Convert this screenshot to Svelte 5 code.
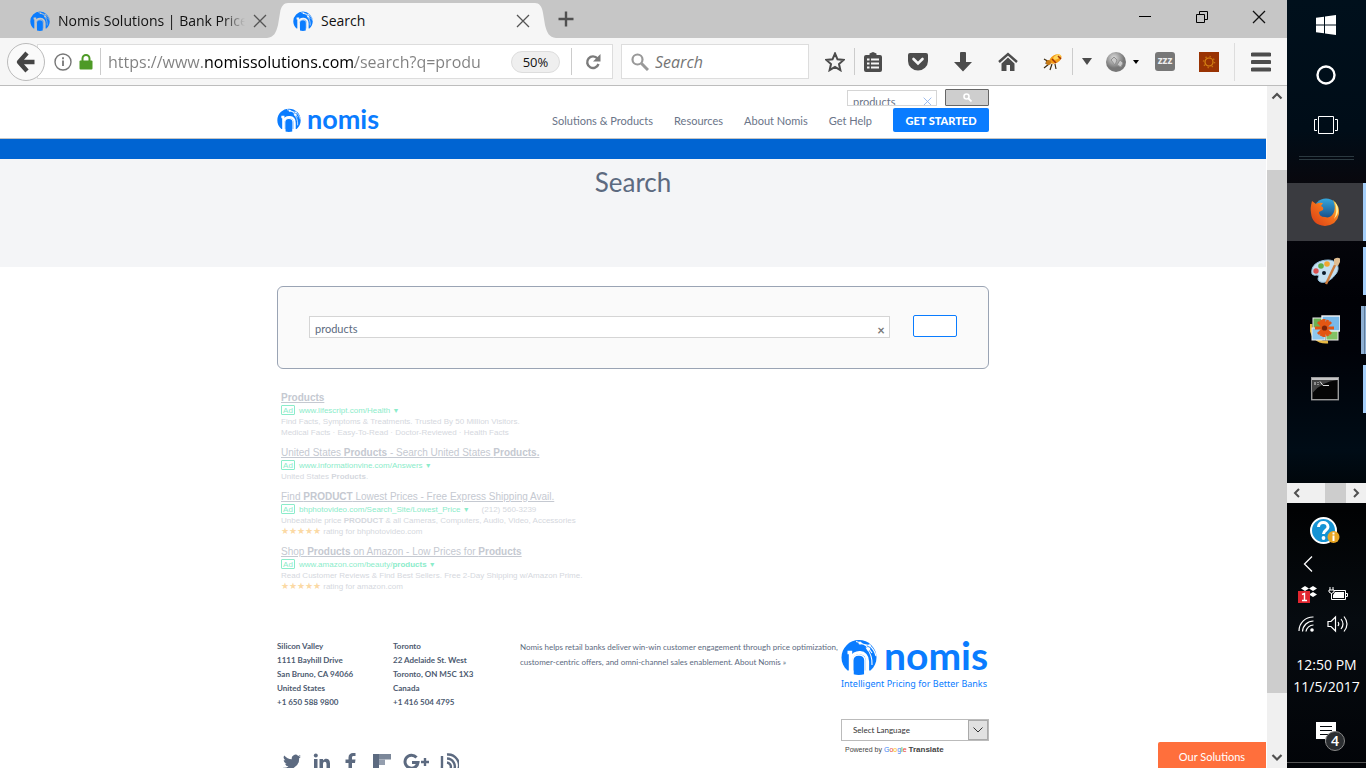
<script>
  let query = $state('products');
  let siteQuery = $state('products');
  let browserQuery = $state('');
  let address = $state('https://www.nomissolutions.com/search?q=products');

  const navLinks = ['Solutions & Products', 'Resources', 'About Nomis', 'Get Help'];

  const results = [
    {
      title: [['Products', true]],
      url: [['www.lifescript.com/Health', false]],
      lines: [
        [['Find Facts, Symptoms & Treatments. Trusted By 50 Million Visitors.', false]],
        [['Medical Facts · Easy-To-Read · Doctor-Reviewed · Health Facts', false]]
      ]
    },
    {
      title: [['United States ', false], ['Products', true], [' - Search United States ', false], ['Products.', true]],
      url: [['www.informationvine.com/Answers', false]],
      lines: [[['United States ', false], ['Products', true], ['.', false]]]
    },
    {
      title: [['Find ', false], ['PRODUCT', true], [' Lowest Prices - Free Express Shipping Avail.', false]],
      url: [['bhphotovideo.com/Search_Site/Lowest_Price', false]],
      phone: '(212) 560-3239',
      lines: [[['Unbeatable price ', false], ['PRODUCT', true], [' & all Cameras, Computers, Audio, Video, Accessories', false]]],
      rating: 'rating for bhphotovideo.com'
    },
    {
      title: [['Shop ', false], ['Products', true], [' on Amazon - Low Prices for ', false], ['Products', true]],
      url: [['www.amazon.com/beauty/', false], ['products', true]],
      lines: [[['Read Customer Reviews & Find Best Sellers. Free 2-Day Shipping w/Amazon Prime.', false]]],
      rating: 'rating for amazon.com'
    }
  ];

  const offices = [
    ['Silicon Valley', '1111 Bayhill Drive', 'San Bruno, CA 94066', 'United States', '+1 650 588 9800'],
    ['Toronto', '22 Adelaide St. West', 'Toronto, ON M5C 1X3', 'Canada', '+1 416 504 4795']
  ];
</script>

{#snippet runs(parts)}{#each parts as [text, bold]}{#if bold}<b>{text}</b>{:else}{text}{/if}{/each}{/snippet}

{#snippet mark(size, ground = '#fff')}
  <svg class="mark" width={size} height={size} viewBox="0 0 36 36" aria-hidden="true">
    <path fill="#0a7cff" d="M6.500 31.500C2.500 28 .5 23.500 .5 18.500a17.500 17.500 0 0 1 35 0C35.500 23.500 33.500 28 29.500 31.500Z" />
    <g fill="none" stroke={ground}>
      <path stroke-width="3.400" d="M6.500 13.500H9.500V33" />
      <path stroke-width="3.200" d="M10 19.500C12.500 11.500 26.500 11 26.500 22.500V33" />
      <path stroke-width="1.100" d="M15 2.500C21 3.500 27 7 31 14M19 4.500L28 6.500M25 8.500C29 13 31.500 18 31 26M29 7C32.500 10 34 13 35 17" />
    </g>
    <path fill="#0a7cff" d="M12.500 35.300V21.500C12.500 18.500 14.500 16.500 17.800 16.500S23.200 18.500 23.200 21.500V35.300C20 36.200 15.500 36.200 12.500 35.300Z" />
    <path fill="none" stroke={ground} stroke-width="1.600" d="M11.700 36V21.500C11.700 14 24 14 24 21.500V36" />
    <g fill={ground}><circle cx="19" cy="4" r="1.500" /><circle cx="27.500" cy="10" r="1.800" /><circle cx="28.500" cy="6.500" r="1.300" /></g>
  </svg>
{/snippet}

{#snippet cross(size)}
  <svg width={size} height={size} viewBox="0 0 14 14" aria-hidden="true"><path d="M1 1L13 13M13 1L1 13" fill="none" stroke="currentColor" stroke-width="1.300" /></svg>
{/snippet}

<div class="desktop">
  <section class="browser" aria-label="Browser">
    <div class="tabs">
      <div class="tab">
        {@render mark(20, '#c6c6c6')}
        <span class="tab-title fade">Nomis Solutions | Bank Price</span>
        <button class="plain tab-close" aria-label="Close tab">{@render cross(14)}</button>
      </div>
      <div class="tab active">
        <svg class="edge left" width="21" height="35" viewBox="0 0 21 35" aria-hidden="true"><path fill="#f6f6f6" d="M0 35C7 34 9 30 11 22L13 10C14 3 17 0 21 0V35Z" /></svg>
        {@render mark(20, '#f6f6f6')}
        <span class="tab-title">Search</span>
        <button class="plain tab-close" aria-label="Close tab">{@render cross(14)}</button>
        <svg class="edge right" width="21" height="35" viewBox="0 0 21 35" aria-hidden="true"><path fill="#f6f6f6" d="M21 35C14 34 12 30 10 22L8 10C7 3 4 0 0 0V35Z" /></svg>
      </div>
      <button class="plain new-tab" aria-label="New tab">
        <svg width="16" height="16" viewBox="0 0 16 16"><path d="M8 .5V15.500M.5 8H15.500" stroke="#505050" stroke-width="2.400" /></svg>
      </button>
      <div class="window-controls">
        <button class="plain" aria-label="Minimize"><svg width="14" height="14" viewBox="0 0 14 14"><path d="M1 6.500H13" stroke="#000" /></svg></button>
        <button class="plain" aria-label="Restore"><svg width="14" height="14" viewBox="0 0 14 14"><path d="M1.500 4.500h8v8h-8zM4.500 4.500v-3h8v8h-3" fill="none" stroke="#000" /></svg></button>
        <button class="plain" aria-label="Close">{@render cross(14)}</button>
      </div>
    </div>

    <div class="toolbar">
      <button class="back" aria-label="Back">
        <svg width="20" height="22" viewBox="0 0 20 22"><path d="M11 2L3 11L11 20M3.500 11H18.500" fill="none" stroke="#454545" stroke-width="4.400" stroke-linejoin="round" /></svg>
      </button>
      <div class="url">
        <svg width="18" height="18" viewBox="0 0 18 18" aria-hidden="true"><circle cx="9" cy="9" r="8" fill="none" stroke="#777" stroke-width="1.400" /><path d="M9 7.500V13M9 4.300V6.200" stroke="#777" stroke-width="1.800" /></svg>
        <svg width="14" height="16" viewBox="0 0 14 16" aria-hidden="true"><path d="M3.500 8V4.500a3.500 3.500 0 0 1 7 0V8" fill="none" stroke="#4e9a26" stroke-width="2" /><rect x=".5" y="6.500" width="13" height="9" rx="1" fill="#4e9a26" /></svg>
        <span class="rule"></span>
        <input class="address" aria-label="Address" bind:value={address} />
        <button class="zoom">50%</button>
        <span class="rule"></span>
        <button class="plain reload" aria-label="Reload"><svg width="16" height="16" viewBox="0 0 16 16"><path d="M12.500 4.500A5.800 5.800 0 1 0 13.500 10" fill="none" stroke="#7b7b7b" stroke-width="2.400" /><path d="M15.500 0V7.500H8Z" fill="#7b7b7b" /></svg></button>
      </div>
      <div class="find">
        <svg width="18" height="18" viewBox="0 0 18 18" aria-hidden="true"><circle cx="6.500" cy="6.500" r="5" fill="none" stroke="#999" stroke-width="2.200" /><path d="M10.500 10.500L17 17" stroke="#999" stroke-width="3" /></svg>
        <input aria-label="Search the web" placeholder="Search" bind:value={browserQuery} />
      </div>
      <div class="tools">
        <button class="plain" aria-label="Bookmark"><svg width="20" height="20" viewBox="0 0 20 20"><path d="M10 1.500L12.500 7.300L18.700 7.900L14 12L15.400 18.200L10 15L4.600 18.200L6 12L1.300 7.900L7.500 7.300Z" fill="none" stroke="#4c4c4c" stroke-width="2" /></svg></button>
        <span class="rule"></span>
        <div class="main-tools">
          <button class="plain" aria-label="Reading list"><svg width="20" height="20" viewBox="0 0 20 20"><path fill="#4c4c4c" d="M6.500 3V1.500L10 0l3.500 1.500V3H17q2 0 2 2v13q0 2-2 2H3q-2 0-2-2V5q0-2 2-2Z" /><path d="M4 7.500h2.500M8 7.500h8M4 11.500h2.500M8 11.500h8M4 15.500h2.500M8 15.500h8" stroke="#f6f6f6" stroke-width="2" /></svg></button>
          <button class="plain" aria-label="Pocket"><svg width="20" height="20" viewBox="0 0 20 20"><path fill="#4c4c4c" d="M2 1h16q2 0 2 2v6a10 9.500 0 0 1-20 0V3q0-2 2-2Z" /><path d="M5.500 7L10 11.500L14.500 7" fill="none" stroke="#f6f6f6" stroke-width="2.600" stroke-linecap="round" /></svg></button>
          <button class="plain" aria-label="Downloads"><svg width="20" height="20" viewBox="0 0 20 20"><path fill="#4c4c4c" d="M7 1q0-1 1-1h4q1 0 1 1v9h6L10 19.500L1 10h6Z" /></svg></button>
          <button class="plain" aria-label="Home"><svg width="20" height="20" viewBox="0 0 20 20"><path d="M1 10L10 2L19 10" fill="none" stroke="#4c4c4c" stroke-width="2.400" /><path fill="#4c4c4c" d="M3.500 11.500L10 5.500L16.500 11.500V19H12V13H8.500V19H3.500Z" /></svg></button>
          <button class="plain" aria-label="Firebug"><svg width="20" height="20" viewBox="0 0 20 20"><path d="M6 10L1 7M6 12L1 16M9 12L7 18M12 12l1 5M4 8L3 12" stroke="#3b2a10" stroke-width="1.200" /><ellipse cx="12.500" cy="7" rx="6.500" ry="4" transform="rotate(-30 12.500 7)" fill="#f49a14" /><ellipse cx="14" cy="5" rx="4" ry="2" transform="rotate(-30 14 5)" fill="#ffd65a" /><path d="M9 7l4 4M15 4l3 3" stroke="#a13505" stroke-width="1.500" /><circle cx="5.500" cy="10.500" r="2.500" fill="#c77a15" /></svg></button>
        </div>
        <span class="rule"></span>
        <button class="plain" aria-label="Firebug menu"><svg width="10" height="7" viewBox="0 0 10 7"><path fill="#4c4c4c" d="M0 0H10L5 7Z" /></svg></button>
        <button class="plain globe" aria-label="Proxy"><svg width="20" height="20" viewBox="0 0 20 20"><defs><radialGradient id="ball" cx=".4" cy=".3"><stop offset="0" stop-color="#ddd" /><stop offset="1" stop-color="#777" /></radialGradient></defs><circle cx="10" cy="10" r="10" fill="url(#ball)" /><path d="M5 8l3-3 3 3-2 5zM11 13l3-5 3 3-2 4z" fill="#c9c9c9" stroke="#909090" /></svg></button>
        <button class="plain tiny" aria-label="Proxy menu"><svg width="6" height="4" viewBox="0 0 6 4"><path d="M0 0H6L3 4Z" /></svg></button>
        <button class="zzz" aria-label="Snooze">zzz</button>
        <button class="plain sun" aria-label="Extension"><svg width="20" height="20" viewBox="0 0 20 20"><rect width="20" height="20" fill="#993303" /><circle cx="10" cy="10" r="4" fill="none" stroke="#d88714" stroke-width="1.200" /><circle cx="10" cy="10" r="5.500" fill="none" stroke="#c97410" stroke-width="1.500" stroke-dasharray="1.300 3" /></svg></button>
        <span class="rule tall"></span>
        <button class="plain" aria-label="Menu"><svg width="20" height="20" viewBox="0 0 20 20"><path d="M1.500 2.500H18.500M1.500 10H18.500M1.500 17.500H18.500" stroke="#4c4c4c" stroke-width="4" stroke-linecap="round" /></svg></button>
      </div>
    </div>

    <div class="viewport">
      <div class="page">
        <header>
          <div class="wrap">
            <form class="mini" onsubmit={(e) => e.preventDefault()}>
              <div class="mini-box">
                <input aria-label="Search site" bind:value={siteQuery} />
                <button type="button" class="plain" aria-label="Clear" onclick={() => (siteQuery = '')}>{@render cross(9)}</button>
              </div>
              <button class="mini-go" aria-label="Search"><svg width="9" height="9" viewBox="0 0 9 9"><circle cx="3.500" cy="3.500" r="2.500" fill="none" stroke="#fff" stroke-width="1.600" /><path d="M5.500 5.500L8.500 8.500" stroke="#fff" stroke-width="1.800" /></svg></button>
            </form>
            <div class="nav-row">
              <a class="logo" href="#home">{@render mark(24)}<span>nomis</span></a>
              <nav>
                {#each navLinks as link}<a href="#nav">{link}</a>{/each}
                <a class="start" href="#start">GET STARTED</a>
              </nav>
            </div>
          </div>
        </header>
        <div class="band"></div>
        <div class="hero"><h1>Search</h1></div>

        <main class="wrap">
          <form class="search-card" onsubmit={(e) => e.preventDefault()}>
            <div class="search-box">
              <input aria-label="Search query" bind:value={query} />
              <button type="button" class="plain" aria-label="Clear" onclick={() => (query = '')}>×</button>
            </div>
            <button class="search-go" aria-label="Search"></button>
          </form>

          <div class="results">
            {#each results as r}
              <article>
                <h2><a href="#result">{@render runs(r.title)}</a></h2>
                <p class="source"><span class="ad">Ad</span><span>{@render runs(r.url)} <i>▼</i></span>{#if r.phone}<span class="phone">{r.phone}</span>{/if}</p>
                {#each r.lines as line}<p>{@render runs(line)}</p>{/each}
                {#if r.rating}<p><span class="stars">★★★★★</span> {r.rating}</p>{/if}
              </article>
            {/each}
          </div>
        </main>

        <footer class="wrap">
          <div class="contact">
            <div class="offices">
              {#each offices as lines}
                <address>{#each lines as line}<span>{line}</span>{/each}</address>
              {/each}
            </div>
            <div class="social">
              <a href="#twitter" aria-label="Twitter"><svg width="18" height="18" viewBox="0 0 24 24"><path fill="#5c6a80" d="M24 4.600a10 10 0 0 1-2.800.8A5 5 0 0 0 23.300 2.700a10 10 0 0 1-3.100 1.200A4.900 4.900 0 0 0 11.800 8.400 14 14 0 0 1 1.700 3.200a4.900 4.900 0 0 0 1.500 6.600A4.900 4.900 0 0 1 1 9.200a4.900 4.900 0 0 0 3.900 4.900 5 5 0 0 1-2.200.1 4.900 4.900 0 0 0 4.600 3.400A9.900 9.900 0 0 1 0 19.500a14 14 0 0 0 21.500-12.400A10 10 0 0 0 24 4.600Z" /></svg></a>
              <a href="#linkedin" aria-label="LinkedIn"><svg width="18" height="18" viewBox="0 0 18 18"><path fill="#5c6a80" d="M1 6h3.500v11H1zM6.500 6H10v1.500C12 4.800 17 5 17 10.500V17h-3.500v-6c0-3-3.500-3-3.500 0v6H6.500z" /><circle cx="2.800" cy="2.500" r="2" fill="#5c6a80" /></svg></a>
              <a href="#facebook" aria-label="Facebook"><svg width="18" height="18" viewBox="0 0 18 18"><path fill="#5c6a80" d="M5.500 18V10H2.500V6.500h3V4.500C5.500 1.500 7.500 0 10 0H12.500v3h-1.800C9.500 3 9 3.500 9 4.500v2H12.500L12 10H9v8Z" /></svg></a>
              <a href="#flipboard" aria-label="Flipboard"><svg width="18" height="18" viewBox="0 0 18 18"><path fill="#5c6a80" d="M0 1h6v17H0z" /><path fill="#7b8799" d="M6 1h12v5.500H6z" /><path fill="#949eae" d="M6 6.500h6V12H6z" /></svg></a>
              <a class="gplus" href="#google" aria-label="Google Plus"><svg width="27" height="18" viewBox="0 0 27 18"><path d="M13.500 4.500A6.500 6.500 0 1 0 15 9.500H9" fill="none" stroke="#5c6a80" stroke-width="3" /><path d="M22 5v8M18 9h8" stroke="#5c6a80" stroke-width="2.400" /></svg></a>
              <a href="#blog" aria-label="Blog feed"><svg width="19" height="18" viewBox="0 0 19 18"><path d="M2 3v10a4.500 4.500 0 1 0 5-3.500M7 5.500a8 8 0 0 1 7 11.500M7 1.500a11 11 0 0 1 11 15.500" fill="none" stroke="#5c6a80" stroke-width="2.400" /></svg></a>
            </div>
          </div>
          <p class="about">Nomis helps retail banks deliver win-win customer engagement through price optimization, customer-centric offers, and omni-channel sales enablement. <a href="#about">About Nomis »</a></p>
          <div class="brand">
            <a class="logo large" href="#home">{@render mark(36)}<span>nomis</span></a>
            <div class="tagline">Intelligent Pricing for Better Banks</div>
            <div class="language">
              <select aria-label="Select Language"><option>Select Language</option></select>
              <span class="arrow"><svg width="10" height="6" viewBox="0 0 10 6" aria-hidden="true"><path d="M.5 .5L5 5L9.500 .5" fill="none" stroke="#333" /></svg></span>
            </div>
            <div class="powered">Powered by <span class="google"><i>G</i><i>o</i><i>o</i><i>g</i><i>l</i><i>e</i></span> <b>Translate</b></div>
          </div>
        </footer>
        <button class="solutions">Our Solutions</button>
      </div>
      <div class="scroll" aria-hidden="true">
        <svg width="20" height="20" viewBox="0 0 20 20"><path d="M5.500 12.500L10 8L14.500 12.500" fill="none" stroke="#505050" stroke-width="2.200" /></svg>
        <div class="track"><div class="thumb"></div></div>
        <svg width="20" height="20" viewBox="0 0 20 20"><path d="M5.500 7L10 11.500L14.500 7" fill="none" stroke="#505050" stroke-width="2.200" /></svg>
      </div>
    </div>
  </section>

  <aside class="taskbar" aria-label="Taskbar">
    <button class="plain slot" aria-label="Start"><svg width="20" height="20" viewBox="0 0 20 20"><path fill="#fff" d="M0 2.800L8 1.700V9.500H0ZM9 1.500L20 0V9.500H9ZM0 10.500H8V18.300L0 17.200ZM9 10.500H20V20L9 18.500Z" /></svg></button>
    <button class="plain slot" aria-label="Cortana"><svg width="20" height="20" viewBox="0 0 20 20"><circle cx="10" cy="10" r="8.500" fill="none" stroke="#fff" stroke-width="2.400" /></svg></button>
    <button class="plain slot" aria-label="Task view"><svg width="24" height="20" viewBox="0 0 24 20"><path d="M4.500 1.500h15v17h-15zM3 4.500H.5v11H3M21 4.500h2.500v11H21" fill="none" stroke="#fff" /></svg></button>
    <div class="grip"></div>
    <button class="app current" aria-label="Firefox"><svg width="30" height="30" viewBox="0 0 30 30"><defs><linearGradient id="fox" x1="0" y1="1" x2="1" y2="0"><stop offset="0" stop-color="#d93a16" /><stop offset=".55" stop-color="#f3711b" /><stop offset="1" stop-color="#ffe14a" /></linearGradient><linearGradient id="sky" x1="0" y1="0" x2="0" y2="1"><stop offset="0" stop-color="#35a7dd" /><stop offset="1" stop-color="#12366f" /></linearGradient></defs><circle cx="16" cy="14" r="12.500" fill="url(#sky)" /><path fill="url(#fox)" d="M2 4L6 7Q9 5 13 6L11 9Q14 10 13 13L9 15Q9 20 15 20Q21 22 24 15Q26 9 23 3Q30 9 29 17Q27 28 15 29Q2 28 1 16Q0 11 2 4Z" /><path fill="#fff0a0" d="M25 5Q30 11 27 18L24 22Q28 14 25 5Z" /></svg></button>
    <button class="app" aria-label="Paint"><svg width="30" height="30" viewBox="0 0 30 30"><path fill="#c4dff0" stroke="#91bbd8" d="M2 18C0 9 9 4 18 4C28 4 31 13 25 19C20 26 12 28 9 25C6 22 11 20 7 19Q4 20 2 18Z" /><circle cx="6" cy="15" r="2.700" fill="#d95050" /><circle cx="11" cy="10" r="2.800" fill="#5fae47" /><circle cx="17" cy="8" r="2.800" fill="#f3a62e" /><circle cx="14" cy="17" r="2" fill="#0b1b2b" /><path d="M16 28L26 7" stroke="#cb7c3e" stroke-width="2.400" /><path fill="#dfbd91" d="M24 9L24 3Q29 0 31 4L28 10Z" /></svg></button>
    <button class="app stacked" aria-label="Photos"><svg width="30" height="30" viewBox="0 0 30 30"><path d="M1 9C0 22 8 28 18 27" fill="none" stroke="#e7b943" stroke-width="3" /><rect x="3" y="3" width="13" height="11" fill="#6ab154" stroke="#eee" /><rect x="16" y="13" width="12" height="12" fill="#82c265" stroke="#eee" /><rect x="2" y="13" width="13" height="12" fill="#8ec7ec" stroke="#eee" /><rect x="12" y="1" width="18" height="15" fill="#78b9ea" stroke="#f4f4f4" stroke-width="1.400" /><g stroke="#e45613" stroke-width="3"><path d="M14 4V22M5 13H24M8 7L21 19M21 7L8 19M11 5L18 21M18 5L11 21" /></g><circle cx="14.500" cy="13" r="2.600" fill="#7c2408" /></svg></button>
    <button class="app" aria-label="Command Prompt"><svg width="28" height="24" viewBox="0 0 28 24"><rect x=".7" y=".7" width="26.600" height="22" fill="#050505" stroke="#9b9b9b" stroke-width="1.400" /><path fill="#c5c5c5" d="M1 1h26v2H1z" /><path fill="#444" d="M1.500 3h25Q10 5 1.500 16Z" /><path d="M4 5v3M7 5v1M7 7v1M9 4.500l3 4M12 8.500h6" stroke="#ddd" /></svg></button>
    <div class="hscroll" aria-hidden="true">
      <svg width="20" height="20" viewBox="0 0 20 20"><path d="M12 6L8 10L12 14" fill="none" stroke="#505050" stroke-width="2" /></svg>
      <span></span>
      <svg width="20" height="20" viewBox="0 0 20 20"><path d="M8 6L12 10L8 14" fill="none" stroke="#505050" stroke-width="2" /></svg>
    </div>
    <div class="tray">
      <button class="plain help" aria-label="Help"><svg width="30" height="28" viewBox="0 0 30 28"><circle cx="13.500" cy="13.500" r="12.500" fill="#1593d4" stroke="#fff" stroke-width="2" /><path d="M8.500 10C8.500 4 18 4 18 10C18 13.500 13.500 13 13.500 17" fill="none" stroke="#fff" stroke-width="3" /><circle cx="13.500" cy="21" r="1.900" fill="#fff" /><circle cx="23.500" cy="20" r="6" fill="#e9a624" /><path d="M23.500 18.500V24M23.500 15.500V17.500" stroke="#fff" stroke-width="2" /></svg></button>
      <button class="plain more" aria-label="Show hidden icons"><svg width="10" height="16" viewBox="0 0 10 16"><path d="M9 .5L1.500 8L9 15.500" fill="none" stroke="#fff" stroke-width="1.300" /></svg></button>
      <div class="pair">
        <button class="plain" aria-label="Dropbox"><svg width="20" height="18" viewBox="0 0 20 18"><path fill="#fff" d="M7 1l4 2.500L7 6 3 3.500ZM15 1l4 2.500L15 6l-4-2.500ZM15 7l4 2.500L15 12l-4-2.500ZM7 6l4 2.500L7 11Z" /><rect x="0" y="6" width="12" height="12" fill="#e22630" /><path d="M4 9.500L6.500 8.500V15.500M4 15.500H9" fill="none" stroke="#fff" stroke-width="1.400" /></svg></button>
        <button class="plain" aria-label="Battery"><svg width="20" height="14" viewBox="0 0 20 14"><path d="M6 3.500H17.500V12.500H3.500V8M18 6.500h1.500v3H18" fill="none" stroke="#fff" /><path fill="#fff" d="M7 5h9v6H5V8Z" /><path d="M1 3h5v2q-2.500 3-5 0ZM2 0v3M5 0v3M3.500 6v3" fill="none" stroke="#fff" /></svg></button>
      </div>
      <div class="pair">
        <button class="plain" aria-label="Wi-Fi"><svg width="17" height="17" viewBox="0 0 17 17"><path d="M1 15A14 14 0 0 1 15.500 1M4.500 15.500A11 11 0 0 1 15.500 5M8 15.500A7.500 7.500 0 0 1 15.500 9" fill="none" stroke="#fff" stroke-width="1.200" /><circle cx="14" cy="14" r="1.800" fill="#fff" /></svg></button>
        <button class="plain" aria-label="Volume"><svg width="21" height="18" viewBox="0 0 21 18"><path d="M1 6.500h3L8.500 2v14L4 11.500H1Z" fill="none" stroke="#fff" stroke-width="1.200" /><path d="M11 7q1.500 2 0 4M14 4q4 5 0 10M17 1.500q6 7.500 0 15" fill="none" stroke="#fff" stroke-width="1.200" /></svg></button>
      </div>
      <time>12:50 PM<br />11/5/2017</time>
      <button class="plain notices" aria-label="Notifications">
        <svg width="20" height="22" viewBox="0 0 20 22"><path fill="#fff" d="M0 0H20V17H13L9 21V17H0Z" /><path d="M4 4.500H16M4 8.500H16M4 12.500H12" stroke="#05090d" /></svg>
        <span>4</span>
      </button>
      <div class="peek"></div>
    </div>
  </aside>
</div>

<style>
  :global(body) { margin: 0; overflow: hidden; }
  button, input, select { font-family: inherit; margin: 0; box-sizing: border-box; }
  svg { display: block; flex: none; }
  h1, h2, p { margin: 0; font-weight: 400; }
  a { color: inherit; text-decoration: none; }
  .desktop { display: flex; height: 100vh; font-family: 'Open Sans', sans-serif; color: #111; }
  .plain { display: flex; align-items: center; justify-content: center; border: 0; padding: 0; background: none; color: inherit; }
  .browser { flex: 1; min-width: 0; display: flex; flex-direction: column; }

  .tabs { display: flex; height: 38px; background: #c6c6c6; flex: none; }
  .tab { display: flex; align-items: center; width: 238px; padding: 3px 0 0 30px; box-sizing: border-box; gap: 8px; font-size: 14px; color: #111; }
  .tab-title { flex: 1; white-space: nowrap; overflow: hidden; line-height: 22px; }
  .fade { mask-image: linear-gradient(90deg, #000 88%, transparent); }
  .tab-close { width: 14px; color: #555; }
  .tab:first-child { width: 267px; }
  .active { position: relative; width: 247px; margin: 3px 21px 0; padding: 0 5px; background: #f6f6f6; }
  .edge { position: absolute; top: 0; }
  .left { right: 100%; }
  .right { left: 100%; }
  .new-tab { width: 20px; }
  .window-controls { display: flex; margin-left: auto; align-items: center; gap: 43px; padding: 0 21px 4px 0; }

  .toolbar { display: flex; align-items: center; height: 48px; flex: none; box-sizing: border-box; border-bottom: 1px solid #bdbdbd; background: #f6f6f6; padding: 0 16px 0 7px; }
  .back { width: 38px; height: 38px; border-radius: 50%; border: 1px solid #bbb; background: #fafafa; display: flex; align-items: center; justify-content: center; padding: 0; z-index: 1; }
  .url, .find { display: flex; align-items: center; height: 35px; box-sizing: border-box; border: 1px solid #ddd; background: #fff; }
  .url { flex: 1; min-width: 0; margin-left: -8px; padding-left: 16px; gap: 7px; }
  .rule { width: 1px; height: 27px; background: #ccc; flex: none; }
  .address { flex: 1; min-width: 0; border: 0; padding: 0; margin-right: 23px; font-size: 16px; height: 26px; color: transparent; background: linear-gradient(90deg, #808080 96px, #000 96px, #000 247px, #808080 247px); -webkit-background-clip: text; background-clip: text; }
  .zoom { width: 49px; height: 22px; border: 1px solid #ddd; border-radius: 11px; background: #efefef; padding: 0; margin-right: 4px; font-size: 13px; color: #111; }
  .reload { width: 27px; margin-right: 6px; }
  .find { width: 188px; margin-left: 8px; padding-left: 9px; gap: 6px; }
  .find input { border: 0; padding: 0; width: 100%; font-size: 16px; font-style: italic; background: none; }
  .find input::placeholder { color: #757575; }
  .tools { display: flex; align-items: center; gap: 9px; margin-left: 16px; }
  .main-tools { display: flex; gap: 25px; margin-left: -1px; }
  .globe { margin-left: 5px; }
  .tiny { width: 8px; margin-left: -3px; }
  .zzz { width: 20px; height: 19px; border: 0; border-radius: 3px; padding: 0 0 3px; margin-left: 6px; background: #777; color: #eee; font-size: 10px; line-height: 14px; font-weight: 700; }
  .sun { margin-left: 15px; }
  .tall { height: 38px; margin-left: 6px; background: #ddd; }
  .tall + .plain { margin-left: 7px; }

  .viewport { flex: 1; min-height: 0; display: flex; background: #fff; }
  .page { position: relative; flex: 1; min-width: 0; overflow: hidden; font-family: Lato, sans-serif; color: #5c6a80; }
  .wrap { max-width: 712px; margin: 0 auto; }
  header { padding: 3px 0 6px; border-bottom: 1px solid #c4c4c4; }
  .mini { display: flex; justify-content: flex-end; align-items: flex-end; gap: 8px; height: 17px; margin-bottom: 2px; }
  .mini-box { display: flex; width: 90px; height: 16px; box-sizing: border-box; border: 1px solid #d5d5d5; overflow: hidden; }
  .mini-box input { flex: 1; min-width: 0; height: 20px; border: 0; padding: 0 0 0 5px; font-size: 11px; color: #6a7488; }
  .mini-box button { width: 18px; height: 20px; color: #8caeea; }
  .mini-go { width: 44px; height: 17px; border: 1px solid #666; border-radius: 1px; background: #cecece; display: flex; justify-content: center; align-items: center; padding: 0; }
  .nav-row { display: flex; justify-content: space-between; height: 24px; }
  .logo { display: flex; gap: 6px; height: 24px; color: #0a7cff; font-size: 27px; font-weight: 700; }
  .logo span { line-height: 22px; }
  nav { display: flex; gap: 21px; font-size: 11px; line-height: 26px; color: #6a7488; }
  .start { width: 96px; height: 24px; border-radius: 2px; background: #0a7cff; text-align: center; font-weight: 900; color: #fff; }
  .band { height: 20px; background: #0064d2; }
  .hero { height: 108px; background: #f4f5f7; text-align: center; }
  .hero h1 { font-size: 26px; line-height: 46px; }
  .search-card { display: flex; margin-top: 19px; height: 83px; box-sizing: border-box; border: 1px solid #9aa4b4; border-radius: 6px; background: #fafafa; padding: 28px 31px; gap: 23px; }
  .search-box { display: flex; flex: 1; height: 22px; margin-top: 1px; box-sizing: border-box; border: 1px solid #d5d5d5; background: #fff; }
  .search-box input { flex: 1; min-width: 0; border: 0; background: none; padding: 3px 5px 0; height: 20px; font-size: 11px; color: #5c6a80; }
  .search-box button { width: 16px; padding-top: 6px; font-size: 13px; font-weight: 700; color: #777; }
  .search-go { width: 44px; height: 22px; border: 1px solid #0a7cff; border-radius: 2px; background: #fff; }

  .results { display: flex; flex-direction: column; gap: 9px; padding: 23px 4px 0; font-family: 'Liberation Sans', sans-serif; font-size: 8px; line-height: 11px; color: #d5d8de; }
  .results h2 { font-size: 10px; line-height: 12px; color: #c5c9d1; text-decoration: underline; }
  .source { display: flex; align-items: center; height: 12px; gap: 4px; color: #8becca; }
  .ad { width: 14px; height: 10px; box-sizing: border-box; border: 1px solid #8becca; border-radius: 1px; line-height: 9px; text-align: center; }
  .source i { font-size: 7px; font-style: normal; }
  .phone { margin-left: 8px; color: #d5d8de; }
  .stars { font-size: 9px; color: #fbd9a4; }

  footer { display: flex; padding-top: 47px; }
  .contact { width: 243px; flex: none; }
  .offices { display: flex; font-size: 8px; line-height: 14px; font-weight: 700; height: 70px; }
  address { width: 116px; font-style: normal; color: #4c5a70; }
  address span { display: block; white-space: nowrap; }
  .social { display: flex; align-items: flex-start; gap: 12px; padding: 44px 0 10px 6px; }
  .gplus { margin-right: -2px; }
  .about { flex: 1; padding-top: 1px; font-size: 8px; line-height: 15px; }
  .brand { width: 148px; flex: none; }
  .large { font-size: 39px; height: 36px; gap: 7px; }
  .large span { line-height: 33px; }
  .tagline { margin-top: 2px; font-family: 'Noto Sans', sans-serif; font-size: 9px; line-height: 14px; color: #0a7cff; white-space: nowrap; }
  .language { position: relative; margin-top: 28px; height: 22px; }
  select { display: block; appearance: none; width: 100%; height: 22px; border: 1px solid #bbb; border-radius: 0; background: #fff; padding: 0 11px; font-size: 8px; color: #333; }
  .arrow { position: absolute; right: 1px; top: 1px; width: 20px; height: 20px; box-sizing: border-box; border: 1px solid #aaa; background: #e1e1e1; display: flex; align-items: center; justify-content: center; pointer-events: none; }
  .powered { padding-left: 4px; font-family: 'Liberation Sans', sans-serif; font-size: 7px; line-height: 18px; color: #444; white-space: nowrap; }
  .powered b { font-size: 8px; }
  .google i { font-style: normal; color: #4285f4; }
  .google i:nth-child(2), .google i:nth-child(6) { color: #ea4335; }
  .google i:nth-child(3) { color: #fbbc05; }
  .google i:nth-child(5) { color: #34a853; }
  .solutions { position: absolute; right: 0; bottom: 0; width: 108px; height: 26px; border: 0; border-radius: 2px 0 0 0; background: #ff6f3c; color: #fff; font-size: 11px; padding: 3px 0 0; }
  .scroll { width: 21px; display: flex; flex-direction: column; background: #f0f0f0; box-sizing: border-box; border-left: 1px solid #fff; }
  .track { flex: 1; padding-top: 64px; }
  .thumb { height: 523px; background: #cdcdcd; }

  .taskbar { width: 79px; flex: none; display: flex; flex-direction: column; background: linear-gradient(#00101c 0, #000d18 130px, #08080e 180px, #000106 300px, #000208 350px, #000c16 450px, #010203 510px, #060b10 620px, #020408 768px); color: #fff; }
  .slot { height: 50px; padding-right: 2px; }
  .grip { height: 2px; margin: 6px 12px 23px; border: solid #2b3940; border-width: 1px 0; }
  .app { height: 58px; margin-bottom: 1px; border: 0; padding: 0 3px 0 0; display: flex; align-items: center; justify-content: center; background: linear-gradient(#a5cffa, #a5cffa) right / 3px 48px no-repeat; }
  .current { background: linear-gradient(#a5cffa, #a5cffa) right / 3px 100% no-repeat, #3a3b40; }
  .stacked { background: linear-gradient(90deg, #8fb0d3 3px, #5f7d9c 3px, #5f7d9c 4px, #8fb0d3 4px) right / 5px 48px no-repeat; }
  .hscroll { display: flex; justify-content: space-between; height: 20px; margin-top: auto; background: #f0f0f0; }
  .hscroll span { width: 21px; margin-left: 17px; background: #cdcdcd; }
  .tray { display: flex; flex-direction: column; height: 265px; flex: none; }
  .help { height: 28px; margin-top: 14px; padding-right: 3px; }
  .more { height: 16px; width: 10px; margin: 11px 0 9px 16px; }
  .pair { display: flex; align-items: center; justify-content: space-between; height: 20px; padding: 0 18px 0 11px; margin: 3px 0 7px; }
  time { margin-top: 13px; text-align: center; font-size: 14px; line-height: 22px; white-space: nowrap; }
  .notices { position: relative; width: 20px; height: 22px; margin: 24px 0 0 29px; }
  .notices span { position: absolute; left: 9px; top: 9px; width: 20px; height: 20px; border-radius: 50%; box-sizing: border-box; border: 1px solid #888; background: #2b2e31; line-height: 18px; font-size: 14px; font-weight: 600; color: #fff; }
  .peek { margin-top: auto; height: 5px; border-top: 1px solid #555; }
</style>
